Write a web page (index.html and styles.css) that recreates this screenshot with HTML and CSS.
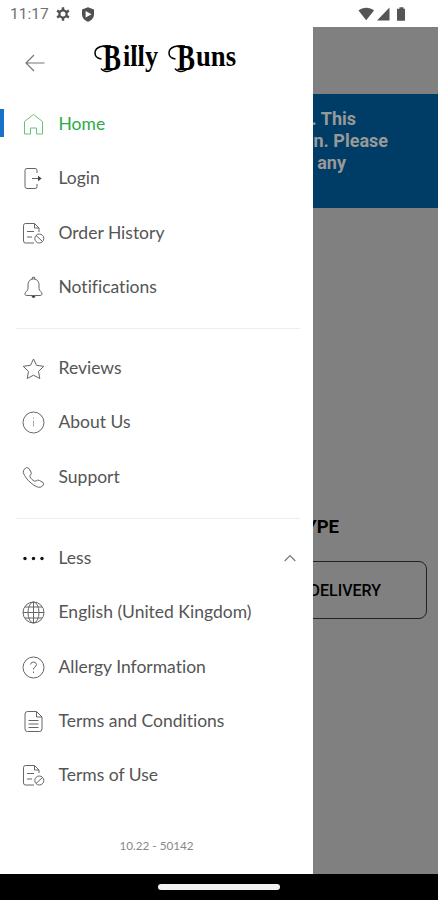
FILE: index.html
```html
<!DOCTYPE html>
<html lang="en">
<head>
  <meta charset="UTF-8" />
  <title>Billy Buns</title>
  <meta name="viewport" content="width=device-width, initial-scale=1.0" />
  <link rel="stylesheet" href="styles.css">
</head>
<body>

  <!-- Status bar -->
  <header class="status-bar">
    <span class="clock">11:17</span>
    <svg class="status-gear" width="14" height="14" viewBox="0 0 14 14">
      <circle cx="7" cy="7" r="3.6" fill="none" stroke="#505050" stroke-width="2.2" />
      <path d="M7 .2v3M7 10.8v3M1.1 3.6l2.6 1.5M10.3 8.9l2.6 1.5M1.1 10.4l2.6-1.5M10.3 5.1l2.6-1.5" stroke="#505050" stroke-width="2.4" />
    </svg>
    <svg class="status-shield" width="14" height="15" viewBox="0 0 14 15">
      <path d="M7 .3l6 2.2v4.7c0 3.4-2.4 6.2-6 7.5-3.6-1.3-6-4.1-6-7.5V2.500z" fill="#505050" />
      <path d="M4.600 3.900L10.500 7.200 4.600 10.500z" fill="#fff" />
    </svg>
    <svg class="status-signals" width="50" height="15" viewBox="0 0 50 15">
      <path d="M.5 3.600C4.800-.1 11.700-.1 16 3.600L8.200 13.300z" fill="#555" />
      <path d="M31.500.5v13H19z" fill="#555" />
      <path d="M41.500.2h4v1.600H47v12h-8v-12h2.500z" fill="#555" />
    </svg>
  </header>

  <div class="screen">

    <!-- Drawer -->
    <aside class="drawer">
      <div class="drawer-header">
        <svg class="back" width="20" height="18" viewBox="0 0 20 18">
          <path d="M19.500 9H1M9 1L1 9l8 8" />
        </svg>
        <svg class="logo" width="144" height="34" viewBox="0 0 144 34">
          <text y="28"><tspan class="initial" x="9" textLength="18" lengthAdjust="spacingAndGlyphs">B</tspan><tspan x="29" y="24" textLength="35" lengthAdjust="spacingAndGlyphs">illy</tspan></text>
          <text y="28"><tspan class="initial" x="83" textLength="18" lengthAdjust="spacingAndGlyphs">B</tspan><tspan x="102" y="24" textLength="40" lengthAdjust="spacingAndGlyphs">uns</tspan></text>
          <path d="M17 4C9 3 1.500 5 1 10.500c-.2 3.500 2.500 6 6.500 6.500M7 26.500c2 3.500 8 4 12 1" />
          <path d="M91 4C83 3 75.500 5 75 10.500c-.2 3.500 2.500 6 6.500 6.500M81 26.500c2 3.500 8 4 12 1" />
          <path d="M38.500 7c.5-2.500 2-3.300 4.500-3M45.500 7c.5-2.500 2-3.300 4.500-3" />
        </svg>
      </div>

      <nav class="menu">
        <a class="item active">
          <svg class="icon" viewBox="0 0 23 23"><path d="M2.500 8.500L11.500 1.500l9 7v12.500h-6v-6h-6v6h-6z" stroke-linejoin="round" /></svg>
          <span>Home</span>
        </a>
        <a class="item">
          <svg class="icon" viewBox="0 0 23 23"><path d="M15 6V3.500q0-2-2-2H5q-2 0-2 2v16q0 2 2 2h8q2 0 2-2V17M10 11.500h9" /><path class="solid" d="M16 8.700l3.700 2.800-3.700 2.800z" /></svg>
          <span>Login</span>
        </a>
        <a class="item">
          <svg class="icon" viewBox="0 0 23 23"><path d="M17 10V6l-4.500-4.500H3.500q-2 0-2 2v15.500q0 2 2 2H12M12.500 1.500V6H17M5 9.500h7M5 15h5" /><circle cx="17.300" cy="16.500" r="4.500" /><path d="M14 13.500l6.500 6" /></svg>
          <span>Order History</span>
        </a>
        <a class="item">
          <svg class="icon" viewBox="0 0 23 23"><path d="M11.500 3C7.500 3 6 6 6 9v3.500c0 2.500-3 3-3 5.500 0 1 .7 1.500 2 1.500h13c1.300 0 2-.5 2-1.500 0-2.500-3-3-3-5.500V9c0-3-1.500-6-5.500-6zM10.300 3V1.300h2.400V3" /><path class="solid" d="M9.500 20h4q-.5 2-2 2t-2-2z" /></svg>
          <span>Notifications</span>
        </a>

        <hr class="divider">

        <a class="item">
          <svg class="icon" viewBox="0 0 23 23"><path d="M11.500 2l3 6.300 7.300 1-5.300 5.100 1.300 7.100-6.300-3.300-6.300 3.300 1.300-7.100-5.300-5.100 7.300-1z" /></svg>
          <span>Reviews</span>
        </a>
        <a class="item">
          <svg class="icon" viewBox="0 0 23 23"><circle cx="11.500" cy="11.500" r="10.500" /><path class="pale" d="M11.500 9.500v6M11.500 6.500v1.500" /></svg>
          <span>About Us</span>
        </a>
        <a class="item">
          <svg class="icon" viewBox="0 0 23 23"><path d="M2 3.500q2.500-3.500 5-1l2 3.500q1 2-1 3.500-1 1.200 2 4 2.500 2.500 4 1.500 1.500-1.500 3.500-.5l3.500 2q1.500 1.500-.5 3.500-3 3-9-1T2.500 9.500Q0 6 2 3.500z" /></svg>
          <span>Support</span>
        </a>

        <hr class="divider">

        <a class="item">
          <svg class="icon" viewBox="0 0 23 23"><g class="solid dots"><circle cx="3" cy="11.500" r="1.700" /><circle cx="11.500" cy="11.500" r="1.700" /><circle cx="20" cy="11.500" r="1.700" /></g></svg>
          <span>Less</span>
          <svg class="chevron" width="12" height="8" viewBox="0 0 12 8"><path d="M.7 7L6 1.500 11.300 7" /></svg>
        </a>
        <a class="item">
          <svg class="icon" viewBox="0 0 23 23"><circle cx="11.500" cy="11.500" r="10.500" /><ellipse cx="11.500" cy="11.500" rx="5.500" ry="10.500" /><path d="M11.500 1v21M1 11.500h21M3 6h17M3 17h17" /></svg>
          <span>English (United Kingdom)</span>
        </a>
        <a class="item">
          <svg class="icon" viewBox="0 0 23 23"><circle cx="11.500" cy="11.500" r="10.500" /><path d="M8.500 8.500q.3-2.500 3-2.500t3 2.500c0 2.500-3 2.200-3 5M11.500 15.500v1.600" /></svg>
          <span>Allergy Information</span>
        </a>
        <a class="item">
          <svg class="icon" viewBox="0 0 23 23"><path d="M14.500 1.500H5.500q-2.500 0-2.500 2.500v15q0 2.500 2.500 2.500h12q2.500 0 2.500-2.500V7zM14.500 1.500V7H20M6.500 10.500h10M6.500 14h10M6.500 17.500h10" /></svg>
          <span>Terms and Conditions</span>
        </a>
        <a class="item">
          <svg class="icon" viewBox="0 0 23 23"><path d="M17 9V6l-4.500-4.500H3.500q-2 0-2 2v15.500q0 2 2 2H12M12.500 1.500V6H17M5 9.500h7M5 15h5" /><circle cx="17.300" cy="16.500" r="4.500" /><path d="M14 19.500l6.500-6" /></svg>
          <span>Terms of Use</span>
        </a>
      </nav>

      <p class="version">10.22 - 50142</p>
    </aside>

    <!-- Dimmed page behind the drawer -->
    <main class="page">
      <div class="notice">
        <p class="line-one">. This</p>
        <p class="line-two">n. Please</p>
        <p class="line-three">any</p>
      </div>
      <h2 class="order-type">YPE</h2>
      <div class="delivery">DELIVERY</div>
    </main>
  </div>

  <!-- Gesture bar -->
  <footer class="gesture-bar"><div class="handle"></div></footer>

</body>
</html>
```
FILE: styles.css
```css
* {
  box-sizing: border-box;
}

body {
  margin: 0;
  height: 900px;
  display: flex;
  flex-direction: column;
  overflow: hidden;
  background: #fff;
  font-family: Lato, "Liberation Sans", sans-serif;
}

p,
h2 {
  margin: 0;
}

/* Status bar */
.status-bar {
  height: 27px;
  flex: none;
  display: flex;
  align-items: center;
  padding: 1px 30px 0 10px;
}

.clock {
  width: 46px;
  font-family: Roboto, sans-serif;
  font-size: 15.5px;
  color: #707070;
}

.status-shield {
  margin-left: 11px;
}

.status-signals {
  margin-left: auto;
}

.screen {
  height: 847px;
  flex: none;
  display: flex;
}

/* Drawer */
.drawer {
  width: 313px;
  flex: none;
  background: #fff;
}

.drawer-header {
  height: 70.3px;
  display: flex;
  align-items: flex-start;
  padding: 15px 0 0 25px;
}

.back {
  margin-top: 12px;
  fill: none;
  stroke: #777;
  stroke-width: 1.2;
}

.logo {
  margin-left: 49px;
  overflow: visible;
}

.logo text {
  font-family: "Liberation Serif", serif;
  font-size: 29px;
  font-weight: bold;
}

.logo .initial {
  font-size: 35px;
}

.logo path {
  fill: none;
  stroke: #000;
  stroke-width: 1.5;
}

.item {
  height: 54.4px;
  display: flex;
  align-items: center;
  gap: 13.5px;
  padding: 0 17px 0 22px;
  font-size: 17.5px;
  font-variant-ligatures: none;
  color: #555;
  white-space: nowrap;
}

.item span {
  padding-bottom: 2px;
}

.icon {
  width: 23px;
  height: 23px;
  flex: none;
  fill: none;
  stroke: #666;
  stroke-width: 1;
}

.icon .solid {
  fill: #444;
  stroke: none;
}

.icon .dots {
  fill: #111;
}

.icon .pale {
  stroke: #aaa;
}

.active {
  color: #2cab45;
  background: linear-gradient(#1871c9, #1871c9) 0 12px / 4px 28px no-repeat;
}

.active .icon {
  stroke: #65c377;
}

.chevron {
  margin-left: auto;
  fill: none;
  stroke: #777;
  stroke-width: 1.2;
}

.divider {
  height: 1px;
  margin: 13px 13px 12.5px 16px;
  border: 0;
  background: #eee;
}

.version {
  margin-top: 34px;
  text-align: center;
  font-size: 11.7px;
  line-height: 16px;
  color: #888;
}

/* Page */
.page {
  flex: 1;
  min-width: 0;
  overflow: hidden;
  padding-top: 67px;
  background: #808080;
  font-family: Roboto, sans-serif;
}

.notice {
  height: 114px;
  padding-top: 14px;
  background: #003d66;
  color: #999;
  font-size: 18px;
  font-weight: bold;
  line-height: 22px;
}

.notice p {
  display: flex;
  justify-content: flex-end;
  white-space: nowrap;
}

.notice .line-one {
  padding-right: 82px;
}

.notice .line-two {
  padding-right: 50px;
}

.notice .line-three {
  padding-right: 92px;
}

.order-type {
  display: flex;
  justify-content: flex-end;
  margin-top: 308px;
  padding-right: 99px;
  font-size: 18.5px;
  line-height: 22px;
}

.delivery {
  display: flex;
  justify-content: flex-end;
  align-items: center;
  height: 58px;
  margin: 23px 11px 0 -20px;
  padding-right: 45px;
  border: 1.5px solid #222;
  border-radius: 8px;
  font-size: 16px;
  font-weight: 500;
}

/* Gesture bar */
.gesture-bar {
  height: 26px;
  flex: none;
  display: flex;
  justify-content: center;
  padding-top: 10px;
  background: #000;
}

.handle {
  width: 122px;
  height: 6px;
  border-radius: 3px;
  background: #f2f2f2;
}
```
